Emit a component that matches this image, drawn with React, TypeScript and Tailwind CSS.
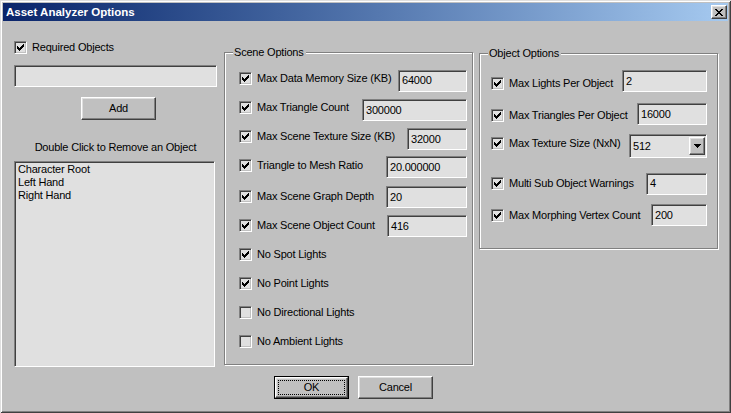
import React from "react";

const CHECK = [2, 3, 4, 3, 2, 1, 0];

function Check({ checked }: { checked: boolean }) {
  return (
    <div className="w-[13px] h-[13px] shrink-0 bg-[#e0e0e0] border border-t-[#808080] border-l-[#808080] border-b-white border-r-white shadow-[inset_1px_1px_0_#404040,inset_-1px_-1px_0_#c0c0c0] flex items-center justify-center">
      {checked && (
        <svg width="7" height="7" viewBox="0 0 7 7" shapeRendering="crispEdges">
          {CHECK.map((y, x) => (
            <rect key={x} x={x} y={y} width="1" height="3" fill="#000" />
          ))}
        </svg>
      )}
    </div>
  );
}

function Field({ value, className }: { value: string; className: string }) {
  return (
    <div
      className={
        "h-[22px] shrink-0 bg-[#e0e0e0] border border-t-[#808080] border-l-[#808080] border-b-white border-r-white shadow-[inset_1px_1px_0_#404040,inset_-1px_-1px_0_#dfdfdf] flex items-center pl-[3px] " +
        className
      }
    >
      {value}
    </div>
  );
}

function Raised({ children, className }: { children?: React.ReactNode; className: string }) {
  return (
    <div
      className={
        "bg-[#c0c0c0] border border-t-white border-l-white border-b-[#404040] border-r-[#404040] shadow-[inset_-1px_-1px_0_#808080,inset_1px_1px_0_#dfdfdf] flex items-center justify-center " +
        className
      }
    >
      {children}
    </div>
  );
}

const XROWS: [number, number][][] = [
  [[0, 2], [6, 2]],
  [[1, 2], [5, 2]],
  [[2, 4]],
  [[3, 2]],
  [[2, 4]],
  [[1, 2], [5, 2]],
  [[0, 2], [6, 2]],
];

function CloseGlyph() {
  return (
    <svg width="8" height="7" viewBox="0 0 8 7" shapeRendering="crispEdges">
      {XROWS.map((segs, y) =>
        segs.map(([x, w], i) => <rect key={y + "-" + i} x={x} y={y} width={w} height="1" fill="#000" />)
      )}
    </svg>
  );
}

function DownArrow() {
  return (
    <svg width="7" height="4" viewBox="0 0 7 4" shapeRendering="crispEdges">
      <rect x="0" y="0" width="7" height="1" fill="#000" />
      <rect x="1" y="1" width="5" height="1" fill="#000" />
      <rect x="2" y="2" width="3" height="1" fill="#000" />
      <rect x="3" y="3" width="1" height="1" fill="#000" />
    </svg>
  );
}

type SceneRow = { label: string; checked: boolean; value?: string; w?: string; extra?: string };

const sceneRows: SceneRow[] = [
  { label: "Max Data Memory Size (KB)", checked: true, value: "64000", w: "w-[69px] mt-[4px]" },
  { label: "Max Triangle Count", checked: true, value: "300000", w: "w-[105px] mt-[5px]" },
  { label: "Max Scene Texture Size (KB)", checked: true, value: "32000", w: "w-[60px] mt-[5px]" },
  { label: "Triangle to Mesh Ratio", checked: true, value: "20.000000", w: "w-[81px] mt-[3px]" },
  { label: "Max Scene Graph Depth", checked: true, value: "20", w: "w-[81px] mt-[1px]", extra: "mt-[2px]" },
  { label: "Max Scene Object Count", checked: true, value: "416", w: "w-[80px] mt-[1px]" },
  { label: "No Spot Lights", checked: true },
  { label: "No Point Lights", checked: true },
  { label: "No Directional Lights", checked: false },
  { label: "No Ambient Lights", checked: false },
];

function GroupLabel({ text }: { text: string }) {
  return (
    <div className="-mt-[7px] ml-[8px] pl-[1px] pr-[2px] w-fit h-[13px] bg-[#c0c0c0] leading-[13px]">{text}</div>
  );
}

export default function App() {
  return (
    <div className="w-[731px] h-[413px] bg-[#c0c0c0] overflow-hidden shadow-[inset_1px_1px_0_#dfdfdf,inset_-1px_-1px_0_#404040,inset_2px_2px_0_#fff,inset_-2px_-2px_0_#808080] font-['Liberation_Sans',Arial,sans-serif] text-[11px] leading-[13px] tracking-[-0.2px] text-black">
      {/* Title bar */}
      <div className="mx-[3px] mt-[3px] h-[18px] bg-linear-to-r from-[#0a246a] to-[#a6caf0] flex items-center justify-between">
        <span className="pl-[3px] text-white font-bold text-[11.5px] tracking-normal">Asset Analyzer Options</span>
        <Raised className="w-[16px] h-[14px] mr-[1px]">
          <CloseGlyph />
        </Raised>
      </div>

      {/* Main content */}
      <div className="flex items-start">
        {/* Left column */}
        <div className="ml-[14px] mt-[20px] w-[203px] flex flex-col">
          <div className="flex items-center gap-[5px] h-[13px]">
            <Check checked />
            <span>Required Objects</span>
          </div>
          <Field value="" className="mt-[11px] w-[203px]" />
          <Raised className="mt-[10px] ml-[67px] w-[75px] h-[23px]">Add</Raised>
          <div className="mt-[21px] text-center">Double Click to Remove an Object</div>
          <div className="mt-[7px] w-[201px] h-[206px] bg-[#e0e0e0] border border-t-[#808080] border-l-[#808080] border-b-white border-r-white shadow-[inset_1px_1px_0_#404040,inset_-1px_-1px_0_#dfdfdf] pt-[1px] pl-[3px]">
            <div>Character Root</div>
            <div>Left Hand</div>
            <div>Right Hand</div>
          </div>
        </div>

        {/* Scene Options */}
        <div className="ml-[7px] mt-[31px] w-[249px] h-[313px] border border-[#808080] shadow-[inset_1px_1px_0_#fff,1px_1px_0_#fff] flex flex-col">
          <GroupLabel text="Scene Options" />
          <div className="mt-[5px] pl-[14px] pr-[5px] flex flex-col">
            {sceneRows.map((r) => (
              <div key={r.label} className={"h-[29px] flex items-center " + (r.extra ?? "")}>
                <Check checked={r.checked} />
                <span className="ml-[5px] whitespace-nowrap">{r.label}</span>
                {r.value !== undefined && <Field value={r.value} className={"ml-auto " + r.w} />}
              </div>
            ))}
          </div>
        </div>

        {/* Object Options */}
        <div className="ml-[6px] mt-[32px] w-[239px] h-[196px] border border-[#808080] shadow-[inset_1px_1px_0_#fff,1px_1px_0_#fff] flex flex-col">
          <GroupLabel text="Object Options" />
          <div className="pl-[11px] pr-[10px] flex flex-col">
            <div className="mt-[11px] h-[25px] flex items-center">
              <Check checked />
              <span className="ml-[5px] whitespace-nowrap">Max Lights Per Object</span>
              <Field value="2" className="ml-auto w-[85px] mb-[5px]" />
            </div>
            <div className="mt-[7px] h-[25px] flex items-center">
              <Check checked />
              <span className="ml-[5px] whitespace-nowrap">Max Triangles Per Object</span>
              <Field value="16000" className="ml-auto w-[70px] mb-[3px]" />
            </div>
            <div className="mt-[3px] h-[25px] flex items-center">
              <Check checked />
              <span className="ml-[5px] whitespace-nowrap">Max Texture Size (NxN)</span>
              <div className="ml-auto mt-[5px] w-[78px] h-[24px] bg-[#e0e0e0] border border-t-[#808080] border-l-[#808080] border-b-white border-r-white shadow-[inset_1px_1px_0_#404040,inset_-1px_-1px_0_#dfdfdf] flex items-center justify-between pl-[3px] pr-[1px]">
                <span>512</span>
                <Raised className="w-[16px] h-[18px]">
                  <DownArrow />
                </Raised>
              </div>
            </div>
            <div className="mt-[15px] h-[25px] flex items-center">
              <Check checked />
              <span className="ml-[5px] whitespace-nowrap">Multi Sub Object Warnings</span>
              <Field value="4" className="ml-auto w-[61px]" />
            </div>
            <div className="mt-[7px] h-[25px] flex items-center">
              <Check checked />
              <span className="ml-[5px] whitespace-nowrap">Max Morphing Vertex Count</span>
              <Field value="200" className="ml-auto w-[56px] mb-[1px]" />
            </div>
          </div>
        </div>
      </div>

      {/* Buttons */}
      <div className="mt-[9px] pl-[274px] flex gap-[9px]">
        <div className="w-[75px] h-[23px] border border-black flex">
          <Raised className="flex-1">
            <div className="self-stretch flex-1 m-[2px] border border-dotted border-black flex items-center justify-center">OK</div>
          </Raised>
        </div>
        <Raised className="w-[75px] h-[23px]">Cancel</Raised>
      </div>
    </div>
  );
}
